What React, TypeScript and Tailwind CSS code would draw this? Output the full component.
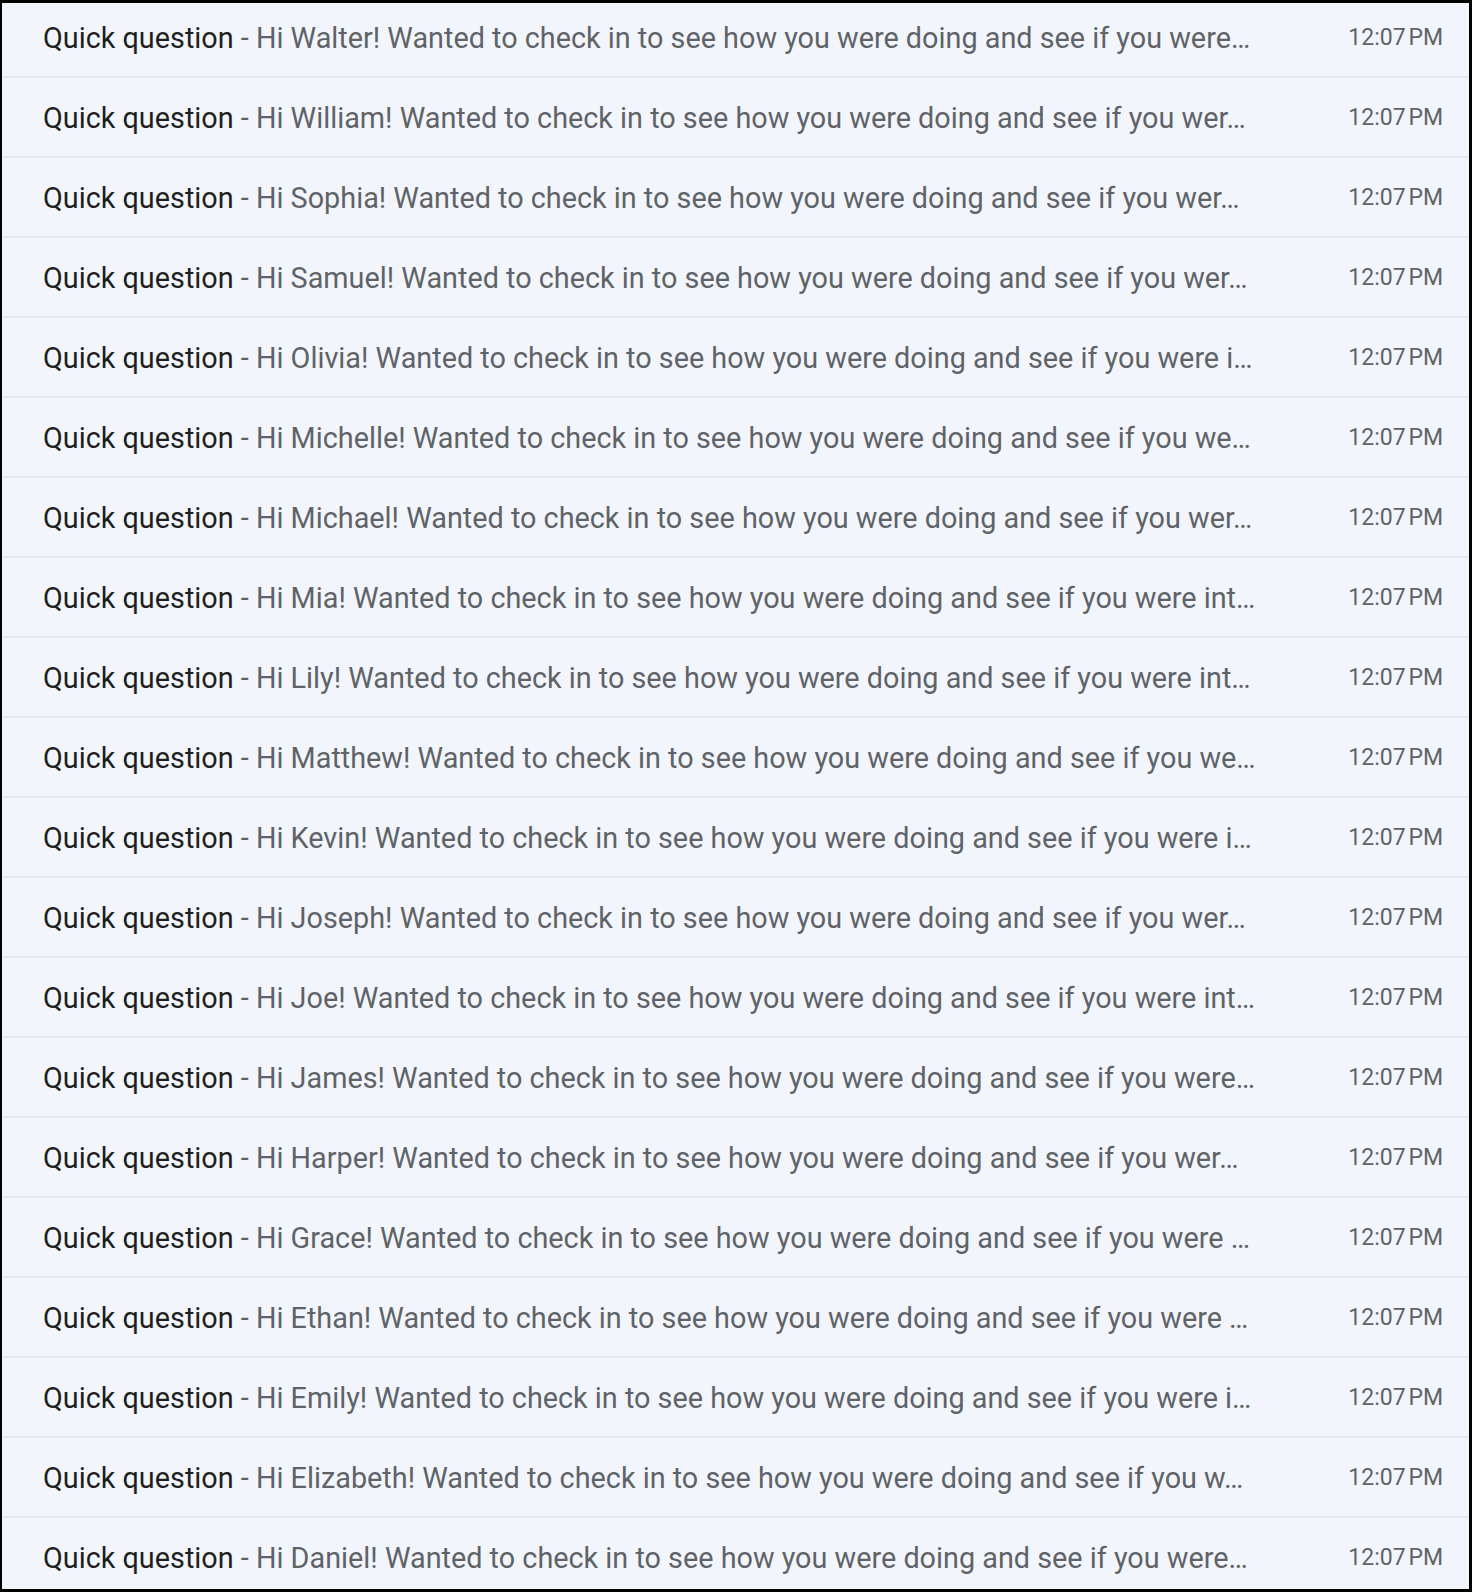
const names = [
  ["Walter", "were…"],
  ["William", "wer…"],
  ["Sophia", "wer…"],
  ["Samuel", "wer…"],
  ["Olivia", "were i…"],
  ["Michelle", "we…"],
  ["Michael", "wer…"],
  ["Mia", "were int…"],
  ["Lily", "were int…"],
  ["Matthew", "we…"],
  ["Kevin", "were i…"],
  ["Joseph", "wer…"],
  ["Joe", "were int…"],
  ["James", "were…"],
  ["Harper", "wer…"],
  ["Grace", "were …"],
  ["Ethan", "were …"],
  ["Emily", "were i…"],
  ["Elizabeth", "w…"],
  ["Daniel", "were…"],
];

function MailRow({ name, tail }: { name: string; tail: string }) {
  return (
    <div className="flex h-[80px] shrink-0 items-center border-b-2 border-[#e3e8ef] pt-[1px] pl-[41px] pr-[26px]">
      <div className="min-w-0 flex-1 overflow-hidden whitespace-nowrap text-[28.8px] leading-[40px]">
        <span className="text-[#1f1f1f]">Quick question</span>
        <span className="text-[#5f6368]">
          {" "}- Hi {name}! Wanted to check in to see how you were doing and see if you {tail}
        </span>
      </div>
      <div className="w-[182px] shrink-0 text-right text-[23px] leading-[40px] text-[#5f6368]">
        12:07&#8239;PM
      </div>
    </div>
  );
}

export default function App() {
  return (
    <div
      className="h-[1592px] w-[1472px] overflow-hidden border-t-[3px] border-r-[3px] border-b-[3px] border-l-2 border-black bg-[#f2f6fc]"
      style={{ fontFamily: "Roboto, 'Noto Sans', sans-serif" }}
    >
      <div className="-mt-[5px] flex flex-col">
        {names.map(([name, tail]) => (
          <MailRow key={name} name={name} tail={tail} />
        ))}
      </div>
    </div>
  );
}
